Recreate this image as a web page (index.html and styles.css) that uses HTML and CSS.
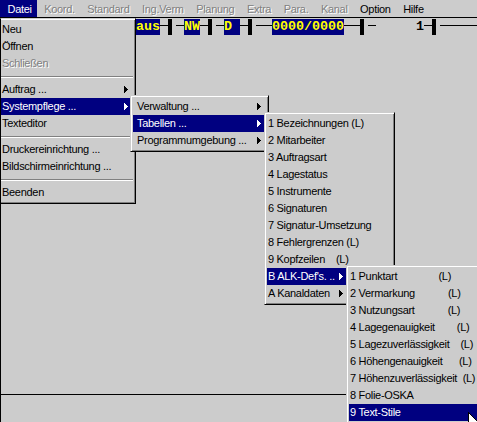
FILE: index.html
```html
<!DOCTYPE html>
<html lang="de">
<head>
<meta charset="utf-8">
<title>Systempflege</title>
<link rel="stylesheet" href="styles.css">
</head>
<body>
<div class="app">
  <nav class="menubar">
    <span class="mb-item active">Datei</span>
    <span class="mb-item dis">Koord.</span>
    <span class="mb-item dis">Standard</span>
    <span class="mb-item dis">Ing.Verm</span>
    <span class="mb-item dis">Planung</span>
    <span class="mb-item dis">Extra</span>
    <span class="mb-item dis">Para.</span>
    <span class="mb-item dis">Kanal</span>
    <span class="mb-item">Option</span>
    <span class="mb-item">Hilfe</span>
  </nav>

  <main class="client">
    <div class="status">
      <span class="fld">aus</span><span class="ln"></span><span class="bar"></span>
      <span class="ln"></span><span class="fld">NW</span><span class="ln"></span><span class="bar"></span>
      <span class="ln"></span><span class="fld">D </span><span class="ln"></span><span class="bar"></span>
      <span class="ln"></span><span class="ln"></span><span class="fld">0000/0000</span><span class="ln"></span><span class="ln"></span><span class="bar"></span>
      <span class="ln"></span><span class="gap"></span><span class="num">1</span><span class="ln"></span><span class="bar"></span>
      <span class="ln ln-end"></span>
    </div>
    <div class="spacer"></div>
    <div class="footer"></div>
  </main>

  <div class="menu m1">
    <div class="mi">Neu</div>
    <div class="mi">Öffnen</div>
    <div class="mi dis">Schließen</div>
    <div class="sep"></div>
    <div class="mi">Auftrag ...<i class="arr"></i></div>
    <div class="mi hl">Systempflege ...<i class="arr"></i></div>
    <div class="mi">Texteditor</div>
    <div class="sep"></div>
    <div class="mi">Druckereinrichtung ...</div>
    <div class="mi">Bildschirmeinrichtung ...</div>
    <div class="sep"></div>
    <div class="mi">Beenden</div>
  </div>

  <div class="menu m2">
    <div class="mi">Verwaltung ...<i class="arr"></i></div>
    <div class="mi hl">Tabellen ...<i class="arr"></i></div>
    <div class="mi">Programmumgebung ...<i class="arr"></i></div>
  </div>

  <div class="menu m3">
    <div class="mi">1 Bezeichnungen (L)</div>
    <div class="mi">2 Mitarbeiter</div>
    <div class="mi">3 Auftragsart</div>
    <div class="mi">4 Lagestatus</div>
    <div class="mi">5 Instrumente</div>
    <div class="mi">6 Signaturen</div>
    <div class="mi">7 Signatur-Umsetzung</div>
    <div class="mi">8 Fehlergrenzen (L)</div>
    <div class="mi">9 Kopfzeilen    (L)</div>
    <div class="mi hl"><span class="tab">B ALK-Def's. ..</span><i class="arr col"></i></div>
    <div class="mi"><span class="tab">A Kanaldaten</span><i class="arr col"></i></div>
  </div>

  <div class="menu m4">
    <div class="mi">1 Punktart               (L)</div>
    <div class="mi">2 Vermarkung            (L)</div>
    <div class="mi">3 Nutzungsart            (L)</div>
    <div class="mi">4 Lagegenauigkeit        (L)</div>
    <div class="mi">5 Lagezuverlässigkeit    (L)</div>
    <div class="mi">6 Höhengenauigkeit      (L)</div>
    <div class="mi">7 Höhenzuverlässigkeit  (L)</div>
    <div class="mi">8 Folie-OSKA</div>
    <div class="mi hl">9 Text-Stile</div>
  </div>

  <svg class="cursor" width="12" height="19" viewBox="0 0 12 19" aria-hidden="true">
    <path d="M0.5 0.5 L0.5 16.5 L4.5 12.5 L7.5 18.5 L9.5 17.5 L6.5 11.5 L11.5 11.5 Z" fill="#fff" stroke="#000" stroke-width="1" shape-rendering="crispEdges"/>
  </svg>
</div>
</body>
</html>
```

FILE: styles.css
```css
html, body {
  margin: 0;
  padding: 0;
}

body {
  background: #cccccc;
  color: #000;
  font-family: "Liberation Sans", Arial, sans-serif;
  font-size: 11px;
  letter-spacing: -0.3px;
  overflow: hidden;
}

.app {
  position: relative;
  width: 477px;
  height: 422px;
  overflow: hidden;
  display: flex;
  flex-direction: column;
}

/* ---------- menu bar ---------- */
.menubar {
  display: flex;
  height: 17px;
  flex: none;
}

.mb-item {
  box-sizing: border-box;
  height: 17px;
  padding: 2px 5px 0 7.5px;
  line-height: 15px;
  white-space: pre;
}

.mb-item.active {
  background: #000080;
  color: #fff;
}

.dis {
  color: #808080;
  text-shadow: 1px 1px 0 #fff;
}

/* ---------- client area ---------- */
.client {
  flex: 1;
  display: flex;
  flex-direction: column;
  border-top: 1px solid #000;
  border-left: 1px solid #000;
}

.status {
  display: flex;
  height: 16px;
  margin: 1px 0 0 135px;
  letter-spacing: 0;
  font-family: "Liberation Mono", "Courier New", monospace;
  font-weight: bold;
  font-size: 13.333px;
  line-height: 16px;
}

.fld {
  background: #000080;
  color: #ffff00;
  white-space: pre;
}

.num {
  color: #000;
  width: 8px;
}

.ln {
  flex: none;
  width: 8px;
  height: 16px;
  background: linear-gradient(#000, #000) 0 6px / 100% 1px no-repeat;
}

.ln-end {
  flex: 1;
}

.bar {
  flex: none;
  width: 8px;
  height: 16px;
  background: linear-gradient(#000, #000) 0 0 / 4px 100% no-repeat;
}

.gap {
  flex: none;
  width: 40px;
}

.spacer {
  flex: 1;
}

.footer {
  height: 27px;
  border-top: 1px solid #000;
  flex: none;
}

/* ---------- popup menus ---------- */
.menu {
  position: absolute;
  box-sizing: border-box;
  background: #cccccc;
  border: 1px solid;
  border-color: #cccccc #000 #000 #cccccc;
  box-shadow: inset 1px 1px 0 #fff, inset -1px -1px 0 #808080;
  padding: 2px;
}

.m1 {
  left: 0;
  top: 18px;
  width: 136px;
  border-left-color: #000;
  padding-left: 0;
  box-shadow: inset 0 1px 0 #fff, inset -1px -1px 0 #808080;
}

.m2 {
  left: 130px;
  top: 95px;
  width: 139px;
}

.m3 {
  left: 264px;
  top: 112px;
  width: 131px;
}

.m4 {
  left: 346px;
  top: 265px;
  width: 140px;
}

.mi {
  display: flex;
  height: 17px;
  box-sizing: border-box;
  padding: 0 0 1px 1px;
  line-height: 16px;
  white-space: pre;
}

.m2 .mi {
  padding-left: 4px;
}

.hl {
  background: #000080;
  color: #fff;
}

.tab {
  flex: none;
  width: 71px;
}

.arr {
  flex: none;
  align-self: flex-start;
  width: 4px;
  height: 7px;
  margin: 5px 5px 0 auto;
  background:
    linear-gradient(currentColor, currentColor) 0 0 / 1px 7px no-repeat,
    linear-gradient(currentColor, currentColor) 1px 1px / 1px 5px no-repeat,
    linear-gradient(currentColor, currentColor) 2px 2px / 1px 3px no-repeat,
    linear-gradient(currentColor, currentColor) 3px 3px / 1px 1px no-repeat;
}

.arr.col {
  margin-left: 0;
}

.sep {
  height: 9px;
  background:
    linear-gradient(#808080, #808080) 0 4px / 100% 1px no-repeat,
    linear-gradient(#fff, #fff) 0 5px / 100% 1px no-repeat;
}

.cursor {
  position: absolute;
  left: 468px;
  top: 412px;
  pointer-events: none;
}
```
